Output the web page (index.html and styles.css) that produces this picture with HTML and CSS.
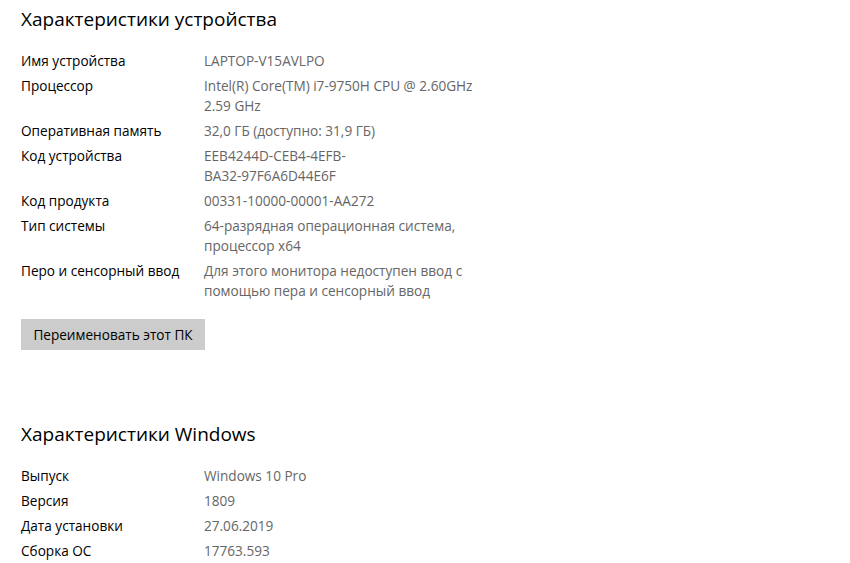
FILE: index.html
```html
<!DOCTYPE html>
<html lang="ru">
<head>
    <meta charset="UTF-8">
    <meta name="viewport" content="width=device-width, initial-scale=1.0">
    <title>О системе</title>
    <link rel="stylesheet" href="styles.css">
</head>
<body>
    <div class="page">
        <h2 class="section-title">Характеристики устройства</h2>
        <div class="spec-list">
            <div class="spec-label">Имя устройства</div>
            <div class="spec-value">LAPTOP-V15AVLPO</div>
            <div class="spec-label">Процессор</div>
            <div class="spec-value">Intel(R) Core(TM) i7-9750H CPU @ 2.60GHz<br>2.59 GHz</div>
            <div class="spec-label">Оперативная память</div>
            <div class="spec-value">32,0 ГБ (доступно: 31,9 ГБ)</div>
            <div class="spec-label">Код устройства</div>
            <div class="spec-value">EEB4244D-CEB4-4EFB-<br>BA32-97F6A6D44E6F</div>
            <div class="spec-label">Код продукта</div>
            <div class="spec-value">00331-10000-00001-AA272</div>
            <div class="spec-label">Тип системы</div>
            <div class="spec-value">64-разрядная операционная система,<br>процессор x64</div>
            <div class="spec-label">Перо и сенсорный ввод</div>
            <div class="spec-value">Для этого монитора недоступен ввод с<br>помощью пера и сенсорный ввод</div>
        </div>
        <button class="rename-btn">Переименовать этот ПК</button>

        <h2 class="section-title windows-title">Характеристики Windows</h2>
        <div class="spec-list">
            <div class="spec-label">Выпуск</div>
            <div class="spec-value">Windows 10 Pro</div>
            <div class="spec-label">Версия</div>
            <div class="spec-value">1809</div>
            <div class="spec-label">Дата установки</div>
            <div class="spec-value">27.06.2019</div>
            <div class="spec-label">Сборка ОС</div>
            <div class="spec-value">17763.593</div>
        </div>
    </div>
</body>
</html>
```

FILE: styles.css
```css
body {
    margin: 0;
    background-color: #ffffff;
    font-family: "Open Sans", "Noto Sans", sans-serif;
    color: #000000;
}
.page {
    padding: 5px 21px 0 21px;
}
.section-title {
    margin: 0;
    font-size: 19px;
    font-weight: 400;
    line-height: 28px;
    color: #000000;
}
.spec-list {
    display: grid;
    grid-template-columns: 183px 1fr;
    row-gap: 5px;
    margin-top: 18px;
    font-size: 13.6px;
    line-height: 20px;
}
.spec-label {
    color: #000000;
}
.spec-value {
    color: #666666;
}
.rename-btn {
    display: block;
    margin-top: 18px;
    width: 184px;
    height: 31px;
    padding: 0;
    border: none;
    background-color: #cccccc;
    font-family: "Open Sans", "Noto Sans", sans-serif;
    font-size: 13.6px;
    color: #000000;
}
.windows-title {
    margin-top: 70px;
}
```
